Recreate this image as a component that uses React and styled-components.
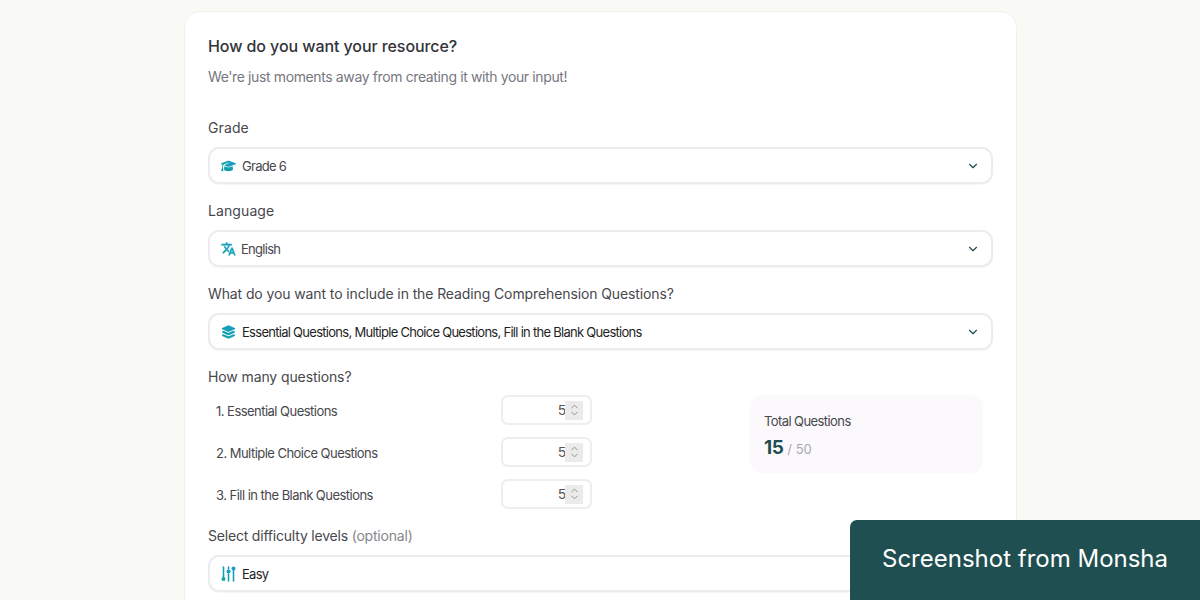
import React from "react";
import styled, { createGlobalStyle } from "styled-components";
import { ChevronDown, ChevronUp } from "lucide-react";
import { FaGraduationCap, FaLayerGroup } from "react-icons/fa6";
import { MdTranslate } from "react-icons/md";

const Global = createGlobalStyle`
  html, body { margin: 0; padding: 0; background: #f9faf5; }
  body { font-family: "Inter", "Liberation Sans", sans-serif; }
  #root { height: 600px; overflow: hidden; }
`;

const Page = styled.div`
  position: relative;
  height: 600px;
  overflow: hidden;
  padding-top: 11px;
  box-sizing: border-box;
`;

const Card = styled.main`
  width: 833px;
  margin: 0 0 0 184px;
  box-sizing: border-box;
  background: #fff;
  border: 1px solid #f1f1ee;
  border-radius: 16px;
  padding: 24px 23px 40px;
  color: #3a3a3e;
`;

const Title = styled.h1`
  margin: 0;
  font-size: 16px;
  line-height: 20px;
  font-weight: 500;
  color: #33333a;
  letter-spacing: -0.08px;
`;

const Subtitle = styled.p`
  margin: 11px 0 0;
  font-size: 14px;
  line-height: 20px;
  font-weight: 400;
  color: #77777f;
  letter-spacing: -0.38px;
`;

const Form = styled.div`
  margin-top: 31px;
`;

const Field = styled.section`
  margin-top: ${(p) => p.$top ?? 17}px;
`;

const Label = styled.div`
  font-size: 14px;
  line-height: 20px;
  font-weight: 400;
  color: #47474d;
  letter-spacing: ${(p) => p.$spacing ?? 0.1}px;
  margin-bottom: ${(p) => p.$gap ?? 9}px;
`;

const Muted = styled.span`
  color: #85858c;
`;

const Select = styled.div`
  height: 37px;
  box-sizing: border-box;
  display: flex;
  align-items: center;
  gap: ${(p) => p.$gap ?? 6}px;
  padding: 1px 11px 0 11px;
  background: #fff;
  border: 2px solid #edebf0;
  border-radius: 11px;
  box-shadow: 0 1px 1px rgba(40, 40, 60, 0.04);
`;

const IconSlot = styled.span`
  display: flex;
  align-items: center;
  justify-content: center;
  width: 15px;
  height: 16px;
  flex: none;
  & svg { fill: url(#iconGrad); }
`;

const TranslateGlyph = styled(MdTranslate)`
  & path:last-child {
    stroke: url(#iconGrad);
    stroke-width: 0.9px;
  }
`;

const SelectText = styled.span`
  flex: 1;
  font-size: 13px;
  line-height: 18px;
  letter-spacing: -0.72px;
  color: ${(p) => (p.$strong ? "#1f1f24" : "#47474d")};
`;

const Chevron = styled(ChevronDown)`
  color: #1f4f50;
  flex: none;
`;

const Counts = styled.div`
  display: flex;
  align-items: flex-start;
  justify-content: space-between;
  padding-right: 10px;
`;

const CountList = styled.div`
  width: 384px;
  display: flex;
  flex-direction: column;
  gap: 12px;
  margin-top: -1px;
`;

const CountRow = styled.div`
  height: 30px;
  display: flex;
  align-items: center;
  justify-content: space-between;
  padding-left: 8px;
  font-size: 13px;
  letter-spacing: -0.53px;
  color: #47474d;
`;

const CountName = styled.span`
  padding-top: 2px;
`;

const NumberBox = styled.div`
  width: 91px;
  height: 30px;
  box-sizing: border-box;
  border: 2px solid #eeeeee;
  border-radius: 7px;
  display: flex;
  align-items: center;
  justify-content: flex-end;
  padding-right: 7px;
  font-family: "Liberation Sans", Arial, sans-serif;
  font-size: 14px;
  letter-spacing: 0;
  color: #555;
`;

const Spinner = styled.span`
  width: 18px;
  height: 19px;
  background: #ebebeb;
  display: flex;
  flex-direction: column;
  align-items: center;
  justify-content: center;
  color: #8a8a8a;
  margin-left: -1px;
  & svg { display: block; margin: -2px 0; }
`;

const TotalCard = styled.aside`
  width: 233px;
  height: 78px;
  box-sizing: border-box;
  background: #fbf9fc;
  border-radius: 12px;
  padding: 17px 14px;
  margin-top: -1px;
`;

const TotalLabel = styled.div`
  font-size: 13px;
  line-height: 18px;
  letter-spacing: -0.58px;
  color: #47474d;
`;

const TotalValue = styled.div`
  margin-top: 6px;
  display: flex;
  align-items: baseline;
  gap: 4px;
  line-height: 24px;
`;

const TotalNumber = styled.span`
  font-size: 19px;
  font-weight: 700;
  color: #1f4f50;
  letter-spacing: -0.5px;
`;

const TotalMax = styled.span`
  font-size: 13px;
  color: #a9a9ad;
`;

const Badge = styled.div`
  position: absolute;
  right: 0;
  bottom: 0;
  width: 350px;
  height: 80px;
  box-sizing: border-box;
  background: #1f4f50;
  border-top-left-radius: 7px;
  padding-left: 32px;
  display: flex;
  align-items: center;
  padding-bottom: 3px;
  color: #fff;
  font-size: 24px;
  font-weight: 400;
  letter-spacing: 0;
`;

const SlidersIcon = () => (
  <svg width="15" height="16" viewBox="0 0 15 16" style={{ fill: "none" }} aria-hidden="true">
    <g stroke="url(#iconGradStroke)" strokeWidth="1.6" strokeLinecap="round">
      <path d="M2.5 1v11" />
      <path d="M7.5 1v2M7.5 8v7" />
      <path d="M12.5 4v11" />
    </g>
    <circle cx="2.5" cy="13" r="2" fill="#12a3a8" />
    <circle cx="7.5" cy="5.5" r="2" fill="#159fb8" />
    <circle cx="12.5" cy="2.5" r="2" fill="#1a9ccc" />
  </svg>
);

const questions = ["1. Essential Questions", "2. Multiple Choice Questions", "3. Fill in the Blank Questions"];

export default function App() {
  return (
    <Page>
      <Global />
      <svg width="0" height="0" style={{ position: "absolute" }} aria-hidden="true">
        <defs>
          <linearGradient id="iconGrad" x1="0" y1="1" x2="1" y2="0">
            <stop offset="0" stopColor="#10a29a" />
            <stop offset="1" stopColor="#1b9dd0" />
          </linearGradient>
          <linearGradient id="iconGradStroke" gradientUnits="userSpaceOnUse" x1="0" y1="16" x2="15" y2="0">
            <stop offset="0" stopColor="#10a29a" />
            <stop offset="1" stopColor="#1b9dd0" />
          </linearGradient>
        </defs>
      </svg>
      <Card>
        <Title>How do you want your resource?</Title>
        <Subtitle>We're just moments away from creating it with your input!</Subtitle>
        <Form>
          <Field $top={0}>
            <Label>Grade</Label>
            <Select $gap={6}>
              <IconSlot><FaGraduationCap size={18} /></IconSlot>
              <SelectText>Grade 6</SelectText>
              <Chevron size={14} />
            </Select>
          </Field>
          <Field>
            <Label>Language</Label>
            <Select $gap={5}>
              <IconSlot><TranslateGlyph size={16} /></IconSlot>
              <SelectText>English</SelectText>
              <Chevron size={14} />
            </Select>
          </Field>
          <Field>
            <Label $spacing={-0.11}>What do you want to include in the Reading Comprehension Questions?</Label>
            <Select>
              <IconSlot><FaLayerGroup size={16} /></IconSlot>
              <SelectText $strong>Essential Questions, Multiple Choice Questions, Fill in the Blank Questions</SelectText>
              <Chevron size={14} />
            </Select>
          </Field>
          <Field>
            <Label $spacing={-0.11}>How many questions?</Label>
            <Counts>
              <CountList>
                {questions.map((q) => (
                  <CountRow key={q}>
                    <CountName>{q}</CountName>
                    <NumberBox>
                      5
                      <Spinner>
                        <ChevronUp size={11} />
                        <ChevronDown size={11} />
                      </Spinner>
                    </NumberBox>
                  </CountRow>
                ))}
              </CountList>
              <TotalCard>
                <TotalLabel>Total Questions</TotalLabel>
                <TotalValue>
                  <TotalNumber>15</TotalNumber>
                  <TotalMax>/ 50</TotalMax>
                </TotalValue>
              </TotalCard>
            </Counts>
          </Field>
          <Field $top={17}>
            <Label $spacing={-0.2} $gap={9}>Select difficulty levels <Muted>(optional)</Muted></Label>
            <Select>
              <IconSlot><SlidersIcon /></IconSlot>
              <SelectText $strong>Easy</SelectText>
              <Chevron size={14} />
            </Select>
          </Field>
        </Form>
      </Card>
      <Badge>Screenshot from Monsha</Badge>
    </Page>
  );
}
